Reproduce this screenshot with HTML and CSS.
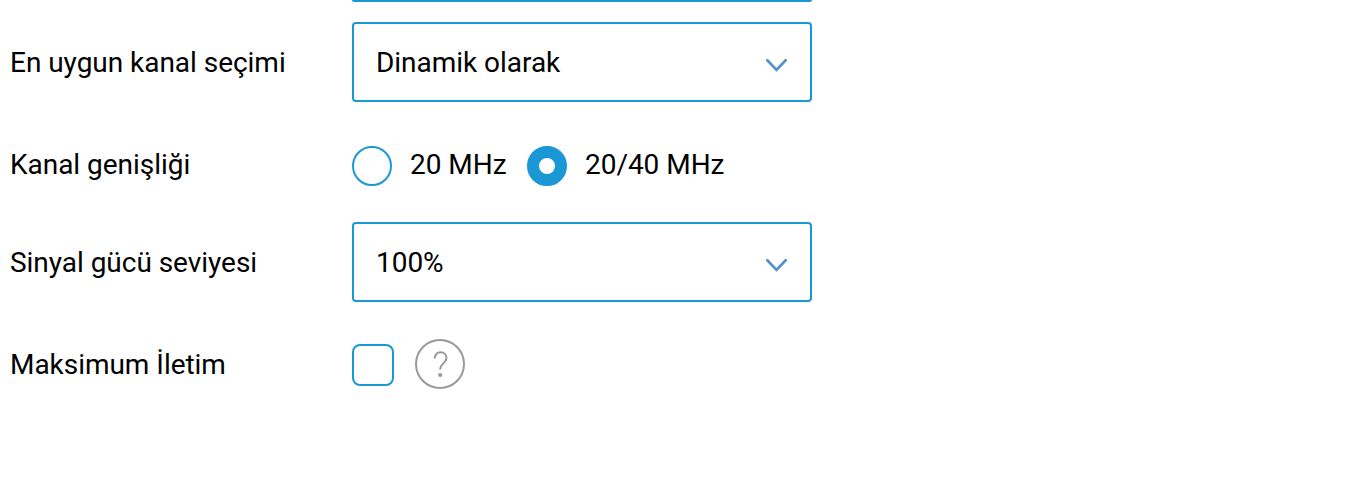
FILE: index.html
```html
<!DOCTYPE html>
<html lang="tr">
<head>
<meta charset="utf-8">
<title>Kablosuz ayarları</title>
<link rel="stylesheet" href="styles.css">
</head>
<body>
<form class="settings">
  <div class="previous-field"></div>
  <div class="row row-select">
    <span class="label">En uygun kanal seçimi</span>
    <div class="select"><span class="value">Dinamik olarak</span>
      <svg class="chevron" viewBox="0 0 24 16"><path d="M3.300 3.300l9.200 9.600 9.200-9.600"/></svg>
    </div>
  </div>
  <div class="row row-radio">
    <span class="label">Kanal genişliği</span>
    <span class="radio"></span><span class="option first">20 MHz</span>
    <span class="radio checked"></span><span class="option">20/40 MHz</span>
  </div>
  <div class="row row-select">
    <span class="label">Sinyal gücü seviyesi</span>
    <div class="select"><span class="value">100%</span>
      <svg class="chevron" viewBox="0 0 24 16"><path d="M3.300 3.300l9.200 9.600 9.200-9.600"/></svg>
    </div>
  </div>
  <div class="row row-check">
    <span class="label">Maksimum İletim</span>
    <span class="checkbox"></span>
    <svg class="help" viewBox="0 0 50 50"><circle cx="25" cy="25" r="24"/><path d="M19.700 19.500c0-3.800 2.500-6.200 6-6.200s5.800 2.400 5.800 5.700c0 5.200-6.300 5.200-6.300 11.500"/><circle class="dot" cx="25.200" cy="36" r="2.100"/></svg>
  </div>
</form>
</body>
</html>
```
FILE: styles.css
```css
* { box-sizing: border-box; }
body {
  margin: 0;
  background: #fff;
  color: #000;
  font: 28px/40px Roboto, sans-serif;
  letter-spacing: -0.035px;
  overflow: hidden;
}
.previous-field {
  width: 460px;
  height: 2px;
  margin: 0 0 20px 352px;
  background: #1998d5;
  border-radius: 0 0 4px 4px;
}
.row {
  display: flex;
  align-items: center;
  padding-left: 10px;
  white-space: nowrap;
}
.row-select { height: 80px; }
.row-radio { height: 120px; padding-top: 8px; }
.row-check { height: 124px; }
.label { width: 342px; flex: none; }
.label, .value { padding-top: 2px; }
.row-radio .label, .option { padding: 0 0 2px; }
.select {
  display: flex;
  align-items: center;
  justify-content: space-between;
  width: 460px;
  height: 80px;
  padding: 0 22px;
  border: 2px solid #1998d5;
  border-radius: 4px;
}
.chevron {
  width: 24px;
  height: 16px;
  margin-top: 6px;
  fill: none;
  stroke: #5590cb;
  stroke-width: 2.7;
  stroke-linecap: round;
}
.radio {
  flex: none;
  width: 40px;
  height: 40px;
  margin-right: 18px;
  border: 2px solid #1998d5;
  border-radius: 50%;
}
.radio.checked { border-width: 12px; }
.first { width: 117px; }
.checkbox {
  width: 42px;
  height: 42px;
  margin: 2px 21px 0 0;
  border: 2px solid #1998d5;
  border-radius: 8px;
}
.help {
  width: 50px;
  height: 50px;
  fill: none;
  stroke: #999;
  stroke-width: 2;
}
.help .dot { fill: #999; stroke: none; }
```
